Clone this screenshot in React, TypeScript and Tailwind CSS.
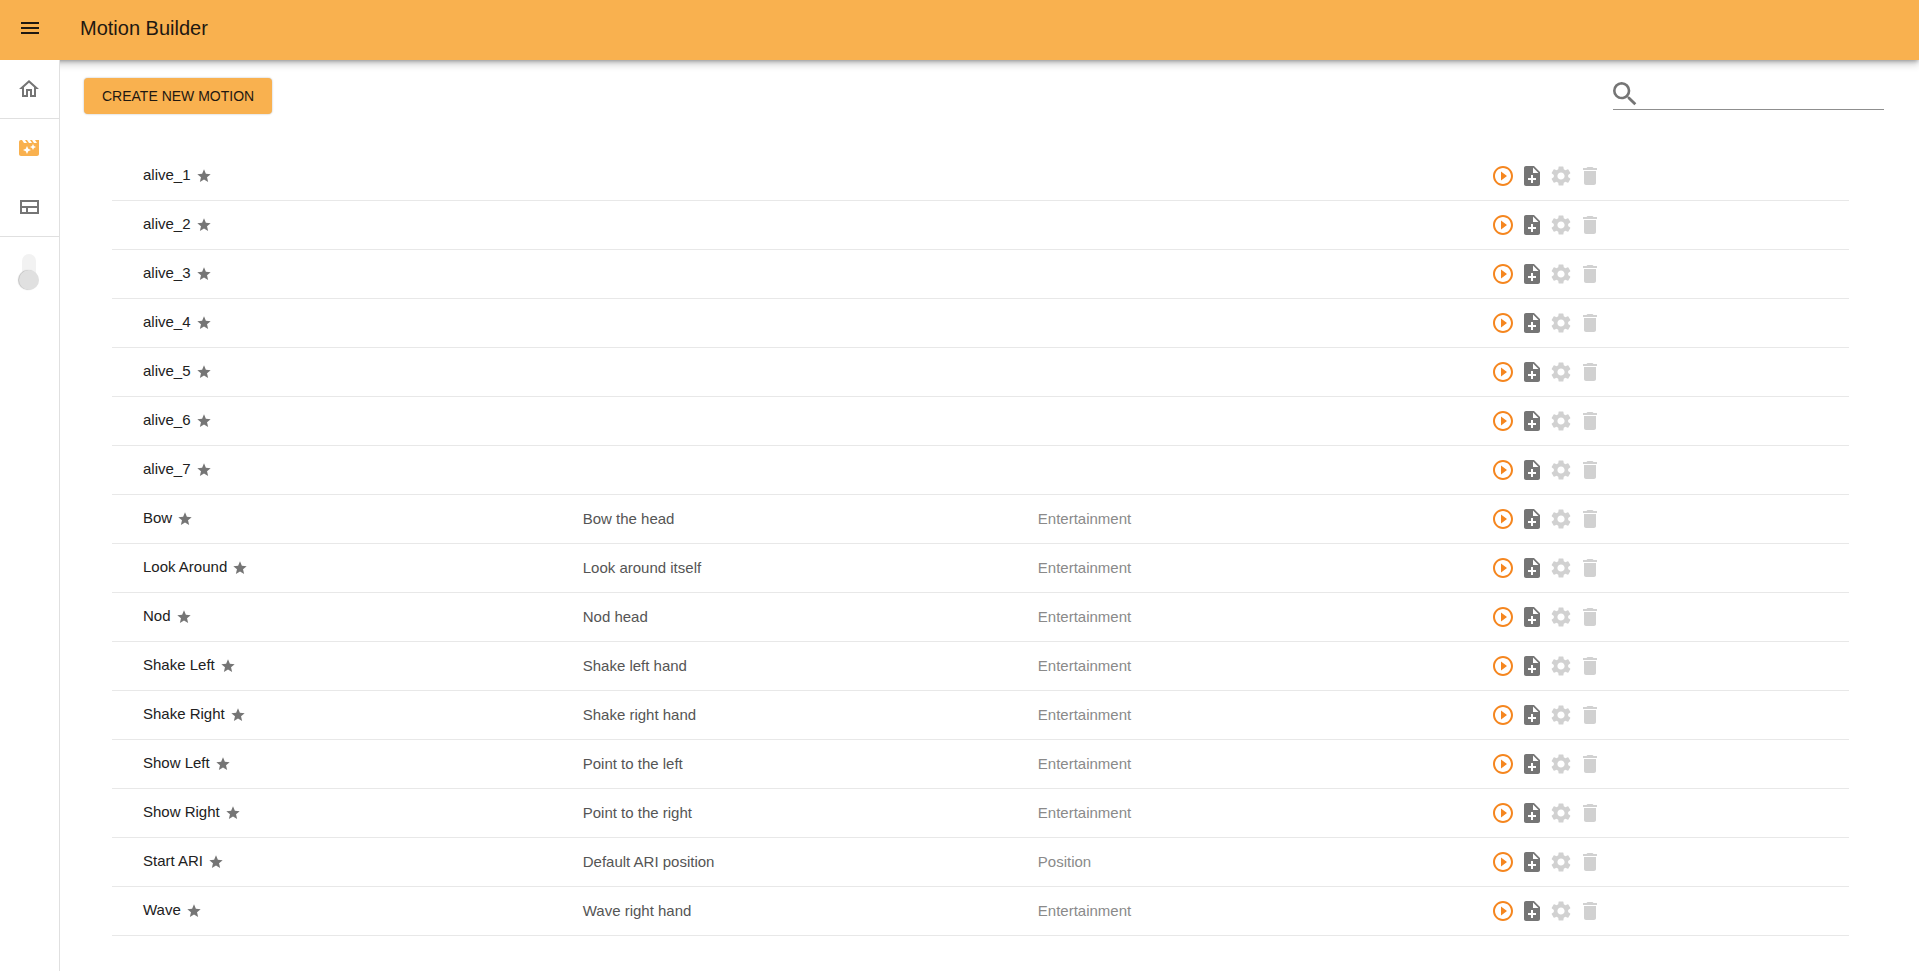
import React, { useState } from 'react';
import {
    MdDelete,
    MdMenu,
    MdMovieFilter,
    MdNoteAdd,
    MdOutlineHome,
    MdPlayCircleOutline,
    MdSearch,
    MdSettings,
    MdStar,
} from 'react-icons/md';

interface Motion {
    name: string;
    description?: string;
    category?: string;
}

const MOTIONS: Motion[] = [
    { name: 'alive_1' },
    { name: 'alive_2' },
    { name: 'alive_3' },
    { name: 'alive_4' },
    { name: 'alive_5' },
    { name: 'alive_6' },
    { name: 'alive_7' },
    { name: 'Bow', description: 'Bow the head', category: 'Entertainment' },
    { name: 'Look Around', description: 'Look around itself', category: 'Entertainment' },
    { name: 'Nod', description: 'Nod head', category: 'Entertainment' },
    { name: 'Shake Left', description: 'Shake left hand', category: 'Entertainment' },
    { name: 'Shake Right', description: 'Shake right hand', category: 'Entertainment' },
    { name: 'Show Left', description: 'Point to the left', category: 'Entertainment' },
    { name: 'Show Right', description: 'Point to the right', category: 'Entertainment' },
    { name: 'Start ARI', description: 'Default ARI position', category: 'Position' },
    { name: 'Wave', description: 'Wave right hand', category: 'Entertainment' },
];

const LayoutIcon = () => (
    <svg viewBox="0 0 24 24" className="w-6 h-6" fill="none" stroke="currentColor" strokeWidth="2">
        <path d="M4 6h17v12H4zM4 12h17M10 12v6" />
    </svg>
);

const Sidebar: React.FC = () => {
    const [enabled, setEnabled] = useState(false);

    return (
        <nav className="relative z-20 w-[60px] shrink-0 bg-white border-r border-[#e0e0e0] text-[#757575]">
            <div className="h-[59px] pl-[17px] border-b border-[#e0e0e0] flex items-center">
                <a href="#home" aria-label="Home"><MdOutlineHome className="w-6 h-6" /></a>
            </div>
            <div className="h-[118px] py-[17px] pl-[17px] border-b border-[#e0e0e0] flex flex-col justify-between">
                <a href="#motions" aria-label="Motions" className="text-[#f9b14f]">
                    <MdMovieFilter className="w-6 h-6" />
                </a>
                <a href="#layouts" aria-label="Layouts">
                    <LayoutIcon />
                </a>
            </div>
            <label className="mt-[17px] ml-[19px] block w-5 h-9 relative cursor-pointer">
                <input
                    type="checkbox"
                    role="switch"
                    aria-label="Enable robot"
                    checked={enabled}
                    onChange={() => setEnabled(!enabled)}
                    className="sr-only peer"
                />
                <span className="block mx-auto w-[14px] h-[34px] rounded-full bg-[#f2f2f2]" />
                <span className="absolute left-0 bottom-0 w-5 h-5 rounded-full bg-[#e0e0e0] shadow-[-1px_0_1px_rgba(0,0,0,0.25)] peer-checked:bottom-4" />
            </label>
        </nav>
    );
};

const MotionRow: React.FC<{ motion: Motion }> = ({ motion }) => (
    <tr className="h-[49px] *:border-b *:border-[#e8e8e8]">
        <td className="pl-[31px]">
            <div className="flex items-center gap-[5px] text-[#212121]">
                <span className="pb-0.5">{motion.name}</span>
                <MdStar className="w-4 h-4 text-[#757575]" />
            </div>
        </td>
        <td className="text-[#555555]">{motion.description}</td>
        <td className="text-[#8a8a8a]">{motion.category}</td>
        <td>
            <div className="flex items-center gap-[5px]">
                <button type="button" aria-label={`Play ${motion.name}`} className="text-[#f5861f]">
                    <MdPlayCircleOutline className="w-6 h-6" />
                </button>
                <button type="button" aria-label={`Duplicate ${motion.name}`} className="text-[#757575]">
                    <MdNoteAdd className="w-6 h-6" />
                </button>
                <button type="button" disabled aria-label={`Edit ${motion.name}`} className="text-[#d1d1d1]">
                    <MdSettings className="w-6 h-6" />
                </button>
                <button type="button" disabled aria-label={`Delete ${motion.name}`} className="text-[#d1d1d1]">
                    <MdDelete className="w-6 h-6" />
                </button>
            </div>
        </td>
    </tr>
);

const App: React.FC = () => {
    const [query, setQuery] = useState('');
    const motions = MOTIONS.filter(m => m.name.toLowerCase().includes(query.toLowerCase()));

    return (
        <div className="min-h-screen flex flex-col bg-white font-['Liberation_Sans',Arial,sans-serif] text-[15px] leading-6">
            <header className="relative z-10 h-[60px] pb-1 flex items-center bg-[#f9b14f] text-[#1f1811] shadow-[0_2px_4px_-1px_rgba(0,0,0,0.3),0_4px_8px_rgba(0,0,0,0.2)]">
                <button type="button" aria-label="Open menu" className="ml-[18px]">
                    <MdMenu className="w-6 h-6" />
                </button>
                <h1 className="ml-[38px] text-xl">Motion Builder</h1>
            </header>

            <div className="flex flex-1">
                <Sidebar />
                <main className="flex-1 min-w-0">
                    <div className="flex items-start justify-between pt-[18px] pl-6 pr-[35px]">
                        <button
                            type="button"
                            className="h-9 px-[18px] rounded bg-[#f9b14f] text-[#1f1811] text-sm uppercase shadow-[0_0_2px_rgba(0,0,0,0.3)]"
                        >
                            Create new motion
                        </button>
                        <label className="flex items-center w-[271px] h-8 border-b border-[#8f8f8f]">
                            <MdSearch className="w-8 h-8 -ml-1 text-[#757575]" />
                            <input
                                type="text"
                                aria-label="Search motions"
                                value={query}
                                onChange={e => setQuery(e.target.value)}
                                className="flex-1 min-w-0 bg-transparent outline-none"
                            />
                        </label>
                    </div>

                    <div className="pt-[38px] pb-8 pl-[52px] pr-[70px]">
                        <table className="w-full table-fixed border-separate border-spacing-0 text-left">
                            <colgroup>
                                <col className="w-[27.1%]" />
                                <col className="w-[26.2%]" />
                                <col className="w-[26.1%]" />
                                <col />
                            </colgroup>
                            <tbody>
                                {motions.map(motion => (
                                    <MotionRow key={motion.name} motion={motion} />
                                ))}
                            </tbody>
                        </table>
                    </div>
                </main>
            </div>
        </div>
    );
};

export default App;
